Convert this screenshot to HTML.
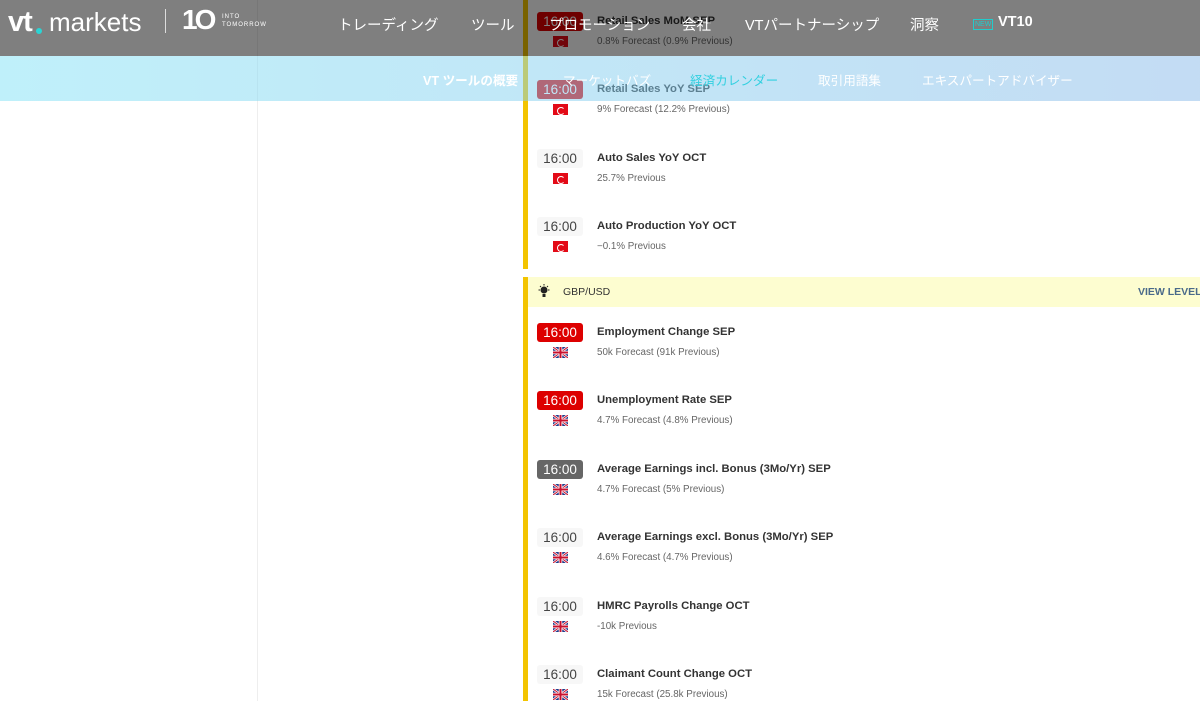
<!DOCTYPE html>
<html><head><meta charset="utf-8"><style>
*{margin:0;padding:0;box-sizing:border-box}
body{width:1200px;height:701px;overflow:hidden;background:#fff;font-family:"Liberation Sans","Noto Sans CJK JP",sans-serif;position:relative}
.vl{position:absolute;left:257px;top:0;width:1px;height:701px;background:#eee}
.yl{position:absolute;left:523px;width:5px;background:#f3c400}
.row{position:absolute;left:537px;width:660px;height:40px}
.t{position:absolute;left:0;top:0;width:46px;height:19px;border-radius:3px;font-size:13.5px;line-height:19px;text-align:center;color:#444;background:#f7f7f7}
.t.r{background:#dd0000;color:#fff}.t.g{background:#666;color:#fff}
.f{position:absolute;left:16px;top:24px;width:15px;height:11px}
.tr{background:#e30a17}
.tr:after{content:"";position:absolute;left:4px;top:2.5px;width:6px;height:6px;border-radius:50%;border:1.5px solid #fff;border-right-color:transparent}
.ti{position:absolute;left:60px;top:3px;font-size:11.3px;font-weight:bold;color:#333;white-space:nowrap}
.su{position:absolute;left:60px;top:24px;font-size:9.8px;color:#666;white-space:nowrap}
.hd{position:absolute;left:0;top:0;width:1200px;height:56px;background:rgba(0,0,0,.5);color:#fff}
.sn{position:absolute;left:0;top:56px;width:1200px;height:45px;background:linear-gradient(90deg,rgba(128,225,245,.5),rgba(136,185,232,.5));color:#fff;font-size:12.6px}
.hd span,.sn span{position:absolute;white-space:nowrap}
.hd span{top:14px;font-size:14.5px}
.sn span{top:14px}
</style></head><body>
<div class="vl"></div>
<div class="yl" style="top:0;height:269px"></div>
<div class="yl" style="top:277px;height:424px"></div>
<div style="position:absolute;left:528px;top:277px;width:672px;height:30px;background:#fdfdd0"></div>
<svg style="position:absolute;left:538px;top:284px" width="12" height="15" viewBox="0 0 12 15"><circle cx="6" cy="6" r="3.5" fill="#222"/><rect x="4.5" y="10" width="3" height="3" fill="#222"/><g stroke="#222" stroke-width="1"><line x1="6" y1="0" x2="6" y2="1.5"/><line x1="0.5" y1="6" x2="2" y2="6"/><line x1="10" y1="6" x2="11.5" y2="6"/><line x1="2" y1="2" x2="3" y2="3"/><line x1="10" y1="2" x2="9" y2="3"/></g></svg>
<div style="position:absolute;left:563px;top:286px;font-size:10.5px;color:#333">GBP/USD</div>
<div style="position:absolute;left:1138px;top:286px;font-size:10.5px;color:#4a6a8a;font-weight:bold;white-space:nowrap">VIEW LEVELS</div>

<div class="row" style="top:12px"><div class="t r">16:00</div><div class="f tr"></div><div class="ti">Retail Sales MoM SEP</div><div class="su">0.8% Forecast (0.9% Previous)</div></div>
<div class="row" style="top:80px"><div class="t r">16:00</div><div class="f tr"></div><div class="ti">Retail Sales YoY SEP</div><div class="su">9% Forecast (12.2% Previous)</div></div>
<div class="row" style="top:149px"><div class="t">16:00</div><div class="f tr"></div><div class="ti">Auto Sales YoY OCT</div><div class="su">25.7% Previous</div></div>
<div class="row" style="top:217px"><div class="t">16:00</div><div class="f tr"></div><div class="ti">Auto Production YoY OCT</div><div class="su">−0.1% Previous</div></div>

<svg width="0" height="0" style="position:absolute"><defs><g id="uk"><rect width="15" height="11" fill="#1f3a8a"/><path d="M0 0L15 11M15 0L0 11" stroke="#fff" stroke-width="2.5"/><path d="M0 0L15 11M15 0L0 11" stroke="#c8102e" stroke-width="1"/><path d="M7.5 0V11M0 5.5H15" stroke="#fff" stroke-width="3.5"/><path d="M7.5 0V11M0 5.5H15" stroke="#c8102e" stroke-width="2"/></g></defs></svg>
<div class="row" style="top:323px"><div class="t r">16:00</div><svg class="f"><use href="#uk"/></svg><div class="ti">Employment Change SEP</div><div class="su">50k Forecast (91k Previous)</div></div>
<div class="row" style="top:391px"><div class="t r">16:00</div><svg class="f"><use href="#uk"/></svg><div class="ti">Unemployment Rate SEP</div><div class="su">4.7% Forecast (4.8% Previous)</div></div>
<div class="row" style="top:460px"><div class="t g">16:00</div><svg class="f"><use href="#uk"/></svg><div class="ti">Average Earnings incl. Bonus (3Mo/Yr) SEP</div><div class="su">4.7% Forecast (5% Previous)</div></div>
<div class="row" style="top:528px"><div class="t">16:00</div><svg class="f"><use href="#uk"/></svg><div class="ti">Average Earnings excl. Bonus (3Mo/Yr) SEP</div><div class="su">4.6% Forecast (4.7% Previous)</div></div>
<div class="row" style="top:597px"><div class="t">16:00</div><svg class="f"><use href="#uk"/></svg><div class="ti">HMRC Payrolls Change OCT</div><div class="su">-10k Previous</div></div>
<div class="row" style="top:665px"><div class="t">16:00</div><svg class="f"><use href="#uk"/></svg><div class="ti">Claimant Count Change OCT</div><div class="su">15k Forecast (25.8k Previous)</div></div>

<div class="hd">
<span style="left:8px;top:6px;font-size:29px;font-weight:bold;letter-spacing:-1px">vt</span>
<span style="left:36px;width:6px;height:6px;border-radius:50%;background:#2bd4d4;top:28px"></span>
<span style="left:49px;top:7px;font-size:26px">markets</span>
<span style="left:165px;top:9px;width:1px;height:24px;background:#ddd"></span>
<span style="left:182px;top:4px;font-size:28px;font-weight:bold;letter-spacing:-3px">1O</span>
<span style="left:222px;top:13px;font-size:6px;line-height:8px;letter-spacing:1px">INTO<br>TOMORROW</span>
<span style="left:338px">トレーディング</span>
<span style="left:471px">ツール</span>
<span style="left:549px">プロモーション</span>
<span style="left:682px">会社</span>
<span style="left:745px">VTパートナーシップ</span>
<span style="left:910px">洞察</span>
<span style="left:973px;top:19px;font-size:7px;border:1px solid #2cc;color:#2cc;padding:0 1px;line-height:9px">NEW</span>
<span style="left:998px;font-weight:bold">VT10</span>
</div>
<div class="sn">
<span style="left:423px;font-weight:bold">VT ツールの概要</span>
<span style="left:563px">マーケットバズ</span>
<span style="left:690px;color:#33d0e0">経済カレンダー</span>
<span style="left:818px">取引用語集</span>
<span style="left:922px">エキスパートアドバイザー</span>
</div>
</body></html>
